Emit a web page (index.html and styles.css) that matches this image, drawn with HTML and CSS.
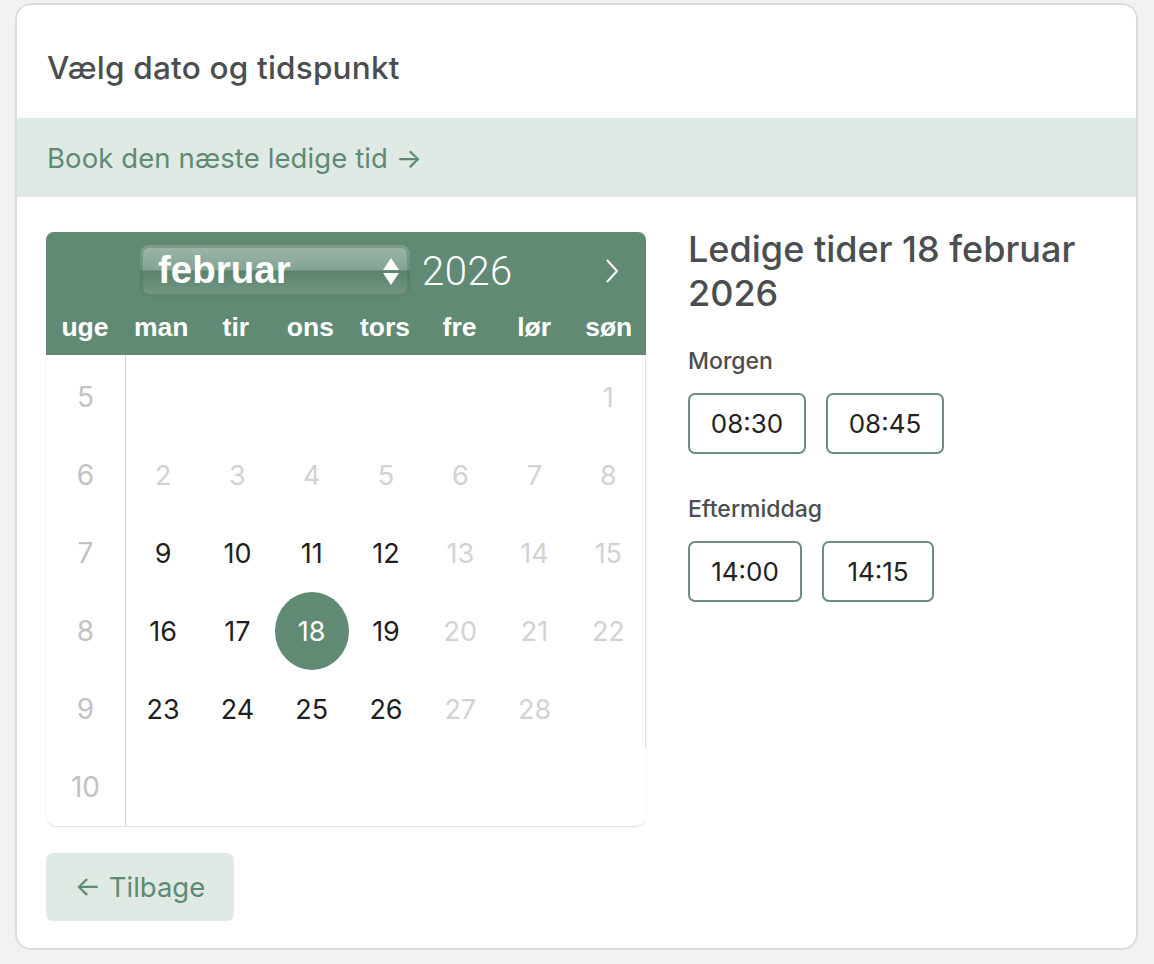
FILE: index.html
```html
<!DOCTYPE html>
<html lang="da">
<head>
<meta charset="utf-8">
<title>Vælg dato og tidspunkt</title>
<link rel="stylesheet" href="styles.css">
</head>
<body>
<div class="card">
  <div class="card-head">Vælg dato og tidspunkt</div>
  <div class="next-band">Book den næste ledige tid →</div>
  <div class="content">
    <div class="left">
      <div class="calendar">
        <div class="cal-head">
          <div class="cal-nav">
            <div class="month-select">
              <span class="month-name">februar</span>
              <span class="spinner"><span class="tri-up"></span><span class="tri-down"></span></span>
            </div>
            <span class="year">2026</span>
            <svg class="next" width="18" height="28" viewBox="0 0 18 28"><path d="M4 3 L14 14 L4 25" fill="none" stroke="#fff" stroke-width="2"/></svg>
          </div>
          <div class="weekdays">
            <span class="wk">uge</span><span>man</span><span>tir</span><span>ons</span><span>tors</span><span>fre</span><span>lør</span><span>søn</span>
          </div>
        </div>
        <div class="cal-body">
          <div class="row"><span class="wn">5</span><span class="d"></span><span class="d"></span><span class="d"></span><span class="d"></span><span class="d"></span><span class="d"></span><span class="d off last">1</span></div>
          <div class="row"><span class="wn">6</span><span class="d off">2</span><span class="d off">3</span><span class="d off">4</span><span class="d off">5</span><span class="d off">6</span><span class="d off">7</span><span class="d off last">8</span></div>
          <div class="row"><span class="wn">7</span><span class="d">9</span><span class="d">10</span><span class="d">11</span><span class="d">12</span><span class="d off">13</span><span class="d off">14</span><span class="d off last">15</span></div>
          <div class="row"><span class="wn">8</span><span class="d">16</span><span class="d">17</span><span class="d sel">18</span><span class="d">19</span><span class="d off">20</span><span class="d off">21</span><span class="d off last">22</span></div>
          <div class="row"><span class="wn">9</span><span class="d">23</span><span class="d">24</span><span class="d">25</span><span class="d">26</span><span class="d off">27</span><span class="d off">28</span><span class="d last"></span></div>
          <div class="row"><span class="wn">10</span></div>
        </div>
      </div>
      <button class="back">← Tilbage</button>
    </div>
    <div class="right">
      <h2 class="slots-title">Ledige tider 18 februar 2026</h2>
      <div class="group-label first">Morgen</div>
      <div class="slots"><button class="slot s1">08:30</button><button class="slot s2">08:45</button></div>
      <div class="group-label">Eftermiddag</div>
      <div class="slots"><button class="slot s3">14:00</button><button class="slot s4">14:15</button></div>
    </div>
  </div>
</div>
</body>
</html>
```
FILE: styles.css
```css
html, body { margin: 0; padding: 0; }
body {
  background: #f2f2f2;
  font-family: "Inter", "Liberation Sans", sans-serif;
  padding: 3px 16px 0 15px;
  height: 964px;
  box-sizing: border-box;
}
.card {
  background: #fff;
  border: 2px solid #dcdcdc;
  border-radius: 16px;
  height: 947px;
  box-sizing: border-box;
  overflow: hidden;
}
.card-head {
  height: 113px;
  display: flex;
  align-items: center;
  padding-left: 30px;
  padding-top: 12px;
  box-sizing: border-box;
  font-size: 31.5px;
  font-weight: 500;
  letter-spacing: 0.2px;
  color: #4b4d4f;
}
.next-band {
  background: #dfeae4;
  height: 79px;
  display: flex;
  align-items: center;
  padding-left: 30px;
  font-size: 27.5px;
  letter-spacing: 0.1px;
  color: #5f8a73;
}
.content {
  display: flex;
  padding: 35px 0 0 29px;
  gap: 42px;
}
.left { width: 600px; }
.calendar {
  border-radius: 10px;
  box-shadow: 0 1px 1px rgba(0,0,0,0.12), 0 0 0 0.5px rgba(0,0,0,0.04);
}
.cal-head {
  background: #618a74;
  border-radius: 8px 8px 0 0;
  height: 123px;
  color: #fff;
  box-sizing: border-box;
  padding-top: 13px;
}
.cal-nav {
  height: 52px;
  display: flex;
  align-items: center;
  padding-left: 94px;
  position: relative;
}
.month-select {
  width: 270px;
  height: 52px;
  box-sizing: border-box;
  border-radius: 9px;
  display: flex;
  align-items: center;
  justify-content: space-between;
  padding: 0 11px 0 18px;
  background: linear-gradient(to bottom, rgba(255,255,255,0.38) 0%, rgba(255,255,255,0.22) 48%, rgba(0,0,0,0.06) 50%, rgba(255,255,255,0.12) 100%);
  box-shadow: inset 0 0 0 3px rgba(70,110,90,0.35), inset 0 -2px 2px rgba(0,0,0,0.05);
}
.month-name {
  font-family: "Liberation Sans", Arial, sans-serif;
  font-weight: 700;
  font-size: 38.5px;
  color: #fff;
  line-height: 1;
  padding-bottom: 2px;
}
.spinner {
  display: flex;
  flex-direction: column;
  gap: 3px;
  align-items: center;
}
.tri-up, .tri-down {
  width: 0; height: 0;
  border-left: 8px solid transparent;
  border-right: 8px solid transparent;
}
.tri-up { border-bottom: 12px solid #fff; }
.tri-down { border-top: 12px solid #fff; }
.year {
  font-family: "Roboto", sans-serif;
  font-weight: 300;
  font-size: 40px;
  margin-left: 12px;
  letter-spacing: 0.5px;
}
.next {
  position: absolute;
  left: 557px;
  top: 12px;
}
.weekdays {
  display: grid;
  grid-template-columns: 78px repeat(7, 1fr);
  margin-top: 15px;
  font-family: "Liberation Sans", Arial, sans-serif;
  font-weight: 700;
  font-size: 26.5px;
  text-align: center;
}
.weekdays span { display: block; }
.cal-body {
  padding-top: 3px;
  background: #fff;
  border-radius: 0 0 10px 10px;
}
.row {
  display: grid;
  grid-template-columns: 80px repeat(7, 1fr);
  height: 78px;
}
.wn {
  display: flex;
  align-items: center;
  justify-content: center;
  font-size: 28px;
  color: #c2c2c2;
  border-right: 1.5px solid #d6d6d6;
}
.row:first-child .wn { margin-top: -3px; padding-top: 3px; }
.d {
  display: flex;
  align-items: center;
  justify-content: center;
  font-size: 27px;
  color: #1f1f1f;
}
.d.off { color: #d2d2d2; }
.d.last { border-right: 1.5px solid #dedede; }
.d.sel {
  background: #618a74;
  color: #fff;
  border-radius: 50%;
}
.back {
  margin-top: 27px;
  width: 188px;
  height: 68px;
  border: none;
  border-radius: 7px;
  background: #dfeae4;
  color: #5f8a73;
  font-family: "Inter", "Liberation Sans", sans-serif;
  font-size: 27.5px;
  padding: 0;
}
.right { flex: 1; padding-right: 30px; }
.slots-title {
  margin: -5px 0 0 0;
  font-size: 36px;
  font-weight: 500;
  line-height: 44px;
  color: #4b4d4f;
}
.group-label {
  margin-top: 28px;
  font-size: 23px;
  font-weight: 500;
  color: #4b4d4f;
  line-height: 30px;
}
.group-label.first { margin-top: 31px; }
.slots {
  display: flex;
  gap: 20px;
  margin-top: 17px;
  margin-bottom: 40px;
}
.slot {
  height: 61px;
  box-sizing: border-box;
  border: 2px solid #6f8d7d;
  border-radius: 7px;
  background: #fff;
  font-family: "Inter", "Liberation Sans", sans-serif;
  font-size: 26px;
  color: #222;
  padding: 0;
}
.s1 { width: 118px; }
.s2 { width: 118px; }
.s3 { width: 114px; }
.s4 { width: 112px; }
```
